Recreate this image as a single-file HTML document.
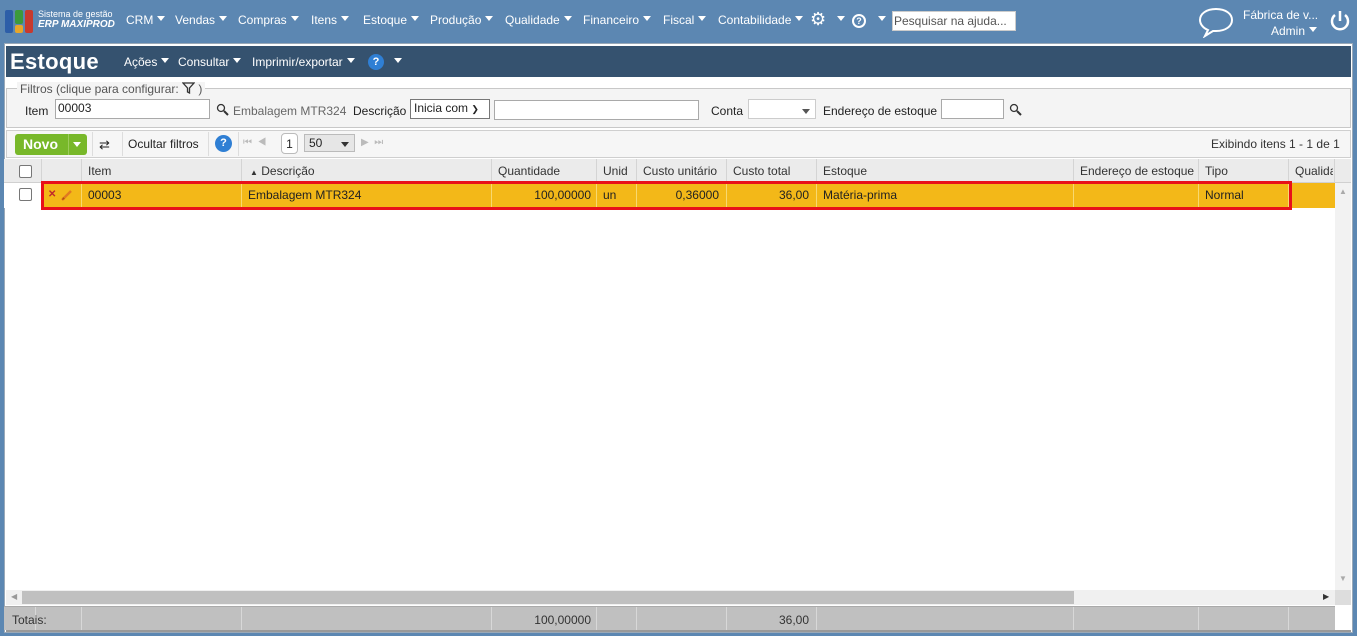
<!DOCTYPE html>
<html><head><meta charset="utf-8">
<style>
*{box-sizing:border-box;margin:0;padding:0}
body{width:1357px;height:636px;overflow:hidden;background:#5c87b2;font-family:"Liberation Sans",sans-serif;font-size:12px;color:#222;position:relative}
.a{position:absolute;white-space:nowrap}
.tri{display:inline-block;width:0;height:0;border-left:4px solid transparent;border-right:4px solid transparent;border-top:5px solid #fff;vertical-align:middle;margin-left:4px;position:relative;top:-2px}
.nav{color:#fff;font-size:12px;top:13px}
.panel{left:4px;top:43px;width:1349px;height:590px;background:#fff;border:1px solid #9aa9b8}
.col{position:absolute;top:0;height:100%;border-left:1px solid #d4d4d4}
.hc{position:absolute;top:5px;color:#333}
.rc{position:absolute;top:5px;color:#222}
.tc{position:absolute;top:6px;color:#333}
.inp{position:absolute;background:#fff;border:1px solid #a9a9a9;height:20px}
.cb{position:absolute;width:13px;height:13px;border:1px solid #777;border-radius:2px;background:#fff}
</style></head><body>
<div class="a" style="left:5px;top:10px;width:28px;height:23px">
 <div class="a" style="left:0;top:0;width:8px;height:23px;background:#2d5ea8;border-radius:2px"></div>
 <div class="a" style="left:10px;top:0;width:8px;height:14px;background:#3c9a3c;border-radius:2px"></div>
 <div class="a" style="left:10px;top:15px;width:8px;height:8px;background:#e7a62a;border-radius:2px"></div>
 <div class="a" style="left:20px;top:0;width:8px;height:23px;background:#c83a2e;border-radius:2px"></div>
</div>
<div class="a" style="left:38px;top:9px;color:#fff;font-size:9px">Sistema de gestão</div>
<div class="a" style="left:38px;top:19px;color:#fff;font-size:10px;font-style:italic;font-weight:bold">ERP MAXIPROD</div>
<div class="a nav" style="left:126px">CRM<span class="tri"></span></div>
<div class="a nav" style="left:175px">Vendas<span class="tri"></span></div>
<div class="a nav" style="left:238px">Compras<span class="tri"></span></div>
<div class="a nav" style="left:311px">Itens<span class="tri"></span></div>
<div class="a nav" style="left:363px">Estoque<span class="tri"></span></div>
<div class="a nav" style="left:430px">Produção<span class="tri"></span></div>
<div class="a nav" style="left:505px">Qualidade<span class="tri"></span></div>
<div class="a nav" style="left:583px">Financeiro<span class="tri"></span></div>
<div class="a nav" style="left:663px">Fiscal<span class="tri"></span></div>
<div class="a nav" style="left:718px">Contabilidade<span class="tri"></span></div>
<div class="a" style="left:810px;top:9px;color:#fff;font-size:18px">⚙</div>
<div class="a nav" style="left:833px"><span class="tri"></span></div>
<div class="a" style="left:852px;top:14px;width:14px;height:14px;border:2px solid #fff;border-radius:50%;color:#fff;font-size:9px;text-align:center;line-height:10px;font-weight:bold">?</div>
<div class="a nav" style="left:874px"><span class="tri"></span></div>
<div class="a" style="left:892px;top:11px;width:124px;height:20px;background:#fff;border:1px solid #ccc;color:#555;padding:2px 1px;font-size:12px">Pesquisar na ajuda...</div>
<svg class="a" style="left:1197px;top:6px" width="38" height="32"><path d="M19 3C9 3 3 8 3 14c0 4 3 8 8 10l-3 6 8-5c1 0 2 0 3 0 10 0 16-5 16-11S29 3 19 3z" fill="none" stroke="#fff" stroke-width="2"/></svg>
<div class="a" style="left:1243px;top:8px;color:#fff;font-size:12px">Fábrica de v...</div>
<div class="a" style="left:1271px;top:24px;color:#fff;font-size:12px">Admin<span class="tri"></span></div>
<svg class="a" style="left:1329px;top:9px" width="22" height="24"><path d="M6 6A8 8 0 1 0 16 6" fill="none" stroke="#fff" stroke-width="2.5"/><line x1="11" y1="2" x2="11" y2="12" stroke="#fff" stroke-width="2.5"/></svg>

<div class="a panel">
 <div class="a" style="left:1px;top:2px;width:1345px;height:31px;background:#35526f"></div>
 <div class="a" style="left:5px;top:5px;color:#fff;font-size:22px;font-weight:bold;letter-spacing:0.3px">Estoque</div>
 <div class="a" style="left:119px;top:11px;color:#fff">Ações<span class="tri"></span></div>
 <div class="a" style="left:173px;top:11px;color:#fff">Consultar<span class="tri"></span></div>
 <div class="a" style="left:247px;top:11px;color:#fff">Imprimir/exportar<span class="tri"></span></div>
 <div class="a" style="left:363px;top:10px;width:16px;height:16px;border-radius:50%;background:#2f7fd4;color:#fff;font-size:11px;font-weight:bold;text-align:center;line-height:16px">?</div>
 <div class="a" style="left:385px;top:11px"><span class="tri"></span></div>
 <div class="a" style="left:1px;top:44px;width:1345px;height:40px;background:#f4f4f4;border:1px solid #c8c8c8"></div>
 <div class="a" style="left:12px;top:38px;color:#555;background:#f4f4f4;padding:0 3px">Filtros (clique para configurar: <svg width="13" height="12" style="vertical-align:-1px"><path d="M1 1h11L7.5 6v5L5.5 10V6z" fill="none" stroke="#333" stroke-width="1.3"/></svg> )</div>
 <div class="a" style="left:20px;top:60px">Item</div>
 <div class="inp" style="left:50px;top:55px;width:155px;padding:1px 2px">00003</div>
 <svg class="a" style="left:211px;top:59px" width="13" height="13"><circle cx="5" cy="5" r="3.5" fill="none" stroke="#333" stroke-width="1.3"/><line x1="8" y1="8" x2="12" y2="12" stroke="#333" stroke-width="2"/></svg>
 <div class="a" style="left:228px;top:60px;color:#666">Embalagem MTR324</div>
 <div class="a" style="left:348px;top:60px">Descrição</div>
 <div class="inp" style="left:405px;top:55px;width:80px;padding:1px 3px;border-color:#777">Inicia com <span style="font-size:9px">❯</span></div>
 <div class="inp" style="left:489px;top:56px;width:205px"></div>
 <div class="a" style="left:706px;top:60px">Conta</div>
 <div class="inp" style="left:743px;top:55px;width:68px;border-color:#ccc"><span class="tri" style="border-top-color:#555;position:absolute;right:5px;top:9px"></span></div>
 <div class="a" style="left:818px;top:60px">Endereço de estoque</div>
 <div class="inp" style="left:936px;top:55px;width:63px"></div>
 <svg class="a" style="left:1004px;top:59px" width="13" height="13"><circle cx="5" cy="5" r="3.5" fill="none" stroke="#333" stroke-width="1.3"/><line x1="8" y1="8" x2="12" y2="12" stroke="#333" stroke-width="2"/></svg>
 <div class="a" style="left:1px;top:86px;width:1345px;height:28px;background:#f6f6f6;border:1px solid #cfcfcf"></div>
 <div class="a" style="left:10px;top:90px;width:72px;height:21px;background:#78b82a;border-radius:3px;color:#fff;font-weight:bold;font-size:14px;padding:2px 0 0 8px">Novo</div>
 <div class="a" style="left:63px;top:90px;width:1px;height:21px;background:#9ccc5c"></div>
 <div class="a" style="left:68px;top:95px"><span class="tri" style="margin:0"></span></div>
 <div class="a" style="left:87px;top:88px;width:1px;height:24px;background:#ddd"></div>
 <div class="a" style="left:94px;top:93px;font-size:13px">⇄</div>
 <div class="a" style="left:117px;top:88px;width:1px;height:24px;background:#ddd"></div>
 <div class="a" style="left:123px;top:93px">Ocultar filtros</div>
 <div class="a" style="left:203px;top:88px;width:1px;height:24px;background:#ddd"></div>
 <div class="a" style="left:210px;top:91px;width:17px;height:17px;border-radius:50%;background:#2f7fd4;color:#fff;font-size:11px;font-weight:bold;text-align:center;line-height:17px">?</div>
 <div class="a" style="left:233px;top:88px;width:1px;height:24px;background:#ddd"></div>
 <div class="a" style="left:238px;top:93px;color:#bbb;font-size:10px">⏮ &nbsp;◀</div>
 <div class="a" style="left:276px;top:89px;width:17px;height:21px;border:1px solid #bbb;border-radius:4px;background:#fff;text-align:center;padding-top:3px">1</div>
 <div class="a" style="left:299px;top:90px;width:51px;height:18px;border:1px solid #bbb;background:#e6e6e6;padding:1px 4px">50<span class="tri" style="border-top-color:#333;position:absolute;right:5px;top:7px;margin:0"></span></div>
 <div class="a" style="left:356px;top:93px;color:#bbb;font-size:10px">▶ &nbsp;⏭</div>
 <div class="a" style="left:1206px;top:93px;color:#333">Exibindo itens 1 - 1 de 1</div>
 <div class="a" style="left:-1px;top:115px;width:1347px;height:24px;background:#ebebeb;border-bottom:1px solid #d0d0d0">
  <div class="col" style="left:37px"></div><div class="col" style="left:77px"></div><div class="col" style="left:237px"></div><div class="col" style="left:487px"></div><div class="col" style="left:592px"></div><div class="col" style="left:632px"></div><div class="col" style="left:722px"></div><div class="col" style="left:812px"></div><div class="col" style="left:1069px"></div><div class="col" style="left:1194px"></div><div class="col" style="left:1284px"></div><div class="col" style="left:1330px"></div>
  <div class="cb" style="left:15px;top:6px"></div>
  <div class="hc" style="left:84px">Item</div>
  <div class="hc" style="left:246px"><span style="font-size:8px">▲</span> Descrição</div>
  <div class="hc" style="left:494px">Quantidade</div>
  <div class="hc" style="left:599px">Unid</div>
  <div class="hc" style="left:639px">Custo unitário</div>
  <div class="hc" style="left:729px">Custo total</div>
  <div class="hc" style="left:819px">Estoque</div>
  <div class="hc" style="left:1076px">Endereço de estoque</div>
  <div class="hc" style="left:1201px">Tipo</div>
  <div class="hc" style="left:1291px;width:38px;overflow:hidden">Qualidade</div>
 </div>
 <div class="a" style="left:-1px;top:139px;width:1331px;height:25px;background:#f3b818">
  <div class="a" style="left:0;top:0;width:37px;height:25px;background:#fff"></div>
  <div class="col" style="left:77px;border-color:#f8d870"></div><div class="col" style="left:237px;border-color:#f8d870"></div><div class="col" style="left:487px;border-color:#f8d870"></div><div class="col" style="left:592px;border-color:#f8d870"></div><div class="col" style="left:632px;border-color:#f8d870"></div><div class="col" style="left:722px;border-color:#f8d870"></div><div class="col" style="left:812px;border-color:#f8d870"></div><div class="col" style="left:1069px;border-color:#f8d870"></div><div class="col" style="left:1194px;border-color:#f8d870"></div><div class="col" style="left:1284px;border-color:#f8d870"></div>
  <div class="cb" style="left:15px;top:5px"></div>
  <div class="rc" style="left:44px;top:6px;color:#c0282b;font-size:10px;font-weight:bold">✕</div>
  <svg class="a" style="left:56px;top:5px" width="14" height="14"><path d="M2 12L11 3" stroke="#e07a20" stroke-width="2.5"/><path d="M2 12l1-3 2 2z" fill="#b05010"/></svg>
  <div class="rc" style="left:84px">00003</div>
  <div class="rc" style="left:244px">Embalagem MTR324</div>
  <div class="rc" style="left:487px;width:100px;text-align:right">100,00000</div>
  <div class="rc" style="left:599px">un</div>
  <div class="rc" style="left:632px;width:83px;text-align:right">0,36000</div>
  <div class="rc" style="left:722px;width:83px;text-align:right">36,00</div>
  <div class="rc" style="left:819px">Matéria-prima</div>
  <div class="rc" style="left:1201px">Normal</div>
 </div>
 <div class="a" style="left:36px;top:137px;width:1251px;height:29px;border:3px solid #e8101a"></div>
 <div class="a" style="left:1330px;top:139px;width:16px;height:407px;background:#f2f2f2"></div>
 <div class="a" style="left:1334px;top:143px;color:#aaa;font-size:8px">▲</div>
 <div class="a" style="left:1334px;top:530px;color:#aaa;font-size:8px">▼</div>
 <div class="a" style="left:1px;top:546px;width:1329px;height:15px;background:#f0f0f0"></div>
 <div class="a" style="left:17px;top:547px;width:1052px;height:13px;background:#c0c0c0"></div>
 <div class="a" style="left:6px;top:548px;color:#999;font-size:8px">◀</div>
 <div class="a" style="left:1318px;top:548px;color:#333;font-size:8px">▶</div>
 <div class="a" style="left:1330px;top:546px;width:16px;height:15px;background:#ddd"></div>
 <div class="a" style="left:-1px;top:562px;width:1331px;height:24px;background:#c0c0c0;border-top:1px solid #aaa">
  <div class="col" style="left:31px;border-color:#d8d8d8"></div><div class="col" style="left:77px;border-color:#d8d8d8"></div><div class="col" style="left:237px;border-color:#d8d8d8"></div><div class="col" style="left:487px;border-color:#d8d8d8"></div><div class="col" style="left:592px;border-color:#d8d8d8"></div><div class="col" style="left:632px;border-color:#d8d8d8"></div><div class="col" style="left:722px;border-color:#d8d8d8"></div><div class="col" style="left:812px;border-color:#d8d8d8"></div><div class="col" style="left:1069px;border-color:#d8d8d8"></div><div class="col" style="left:1194px;border-color:#d8d8d8"></div><div class="col" style="left:1284px;border-color:#d8d8d8"></div>
  <div class="tc" style="left:8px">Totais:</div>
  <div class="tc" style="left:487px;width:100px;text-align:right">100,00000</div>
  <div class="tc" style="left:722px;width:83px;text-align:right">36,00</div>
 </div>
 <div class="a" style="left:1px;top:586px;width:1345px;height:2px;background:#999"></div>
</div>
</body></html>
